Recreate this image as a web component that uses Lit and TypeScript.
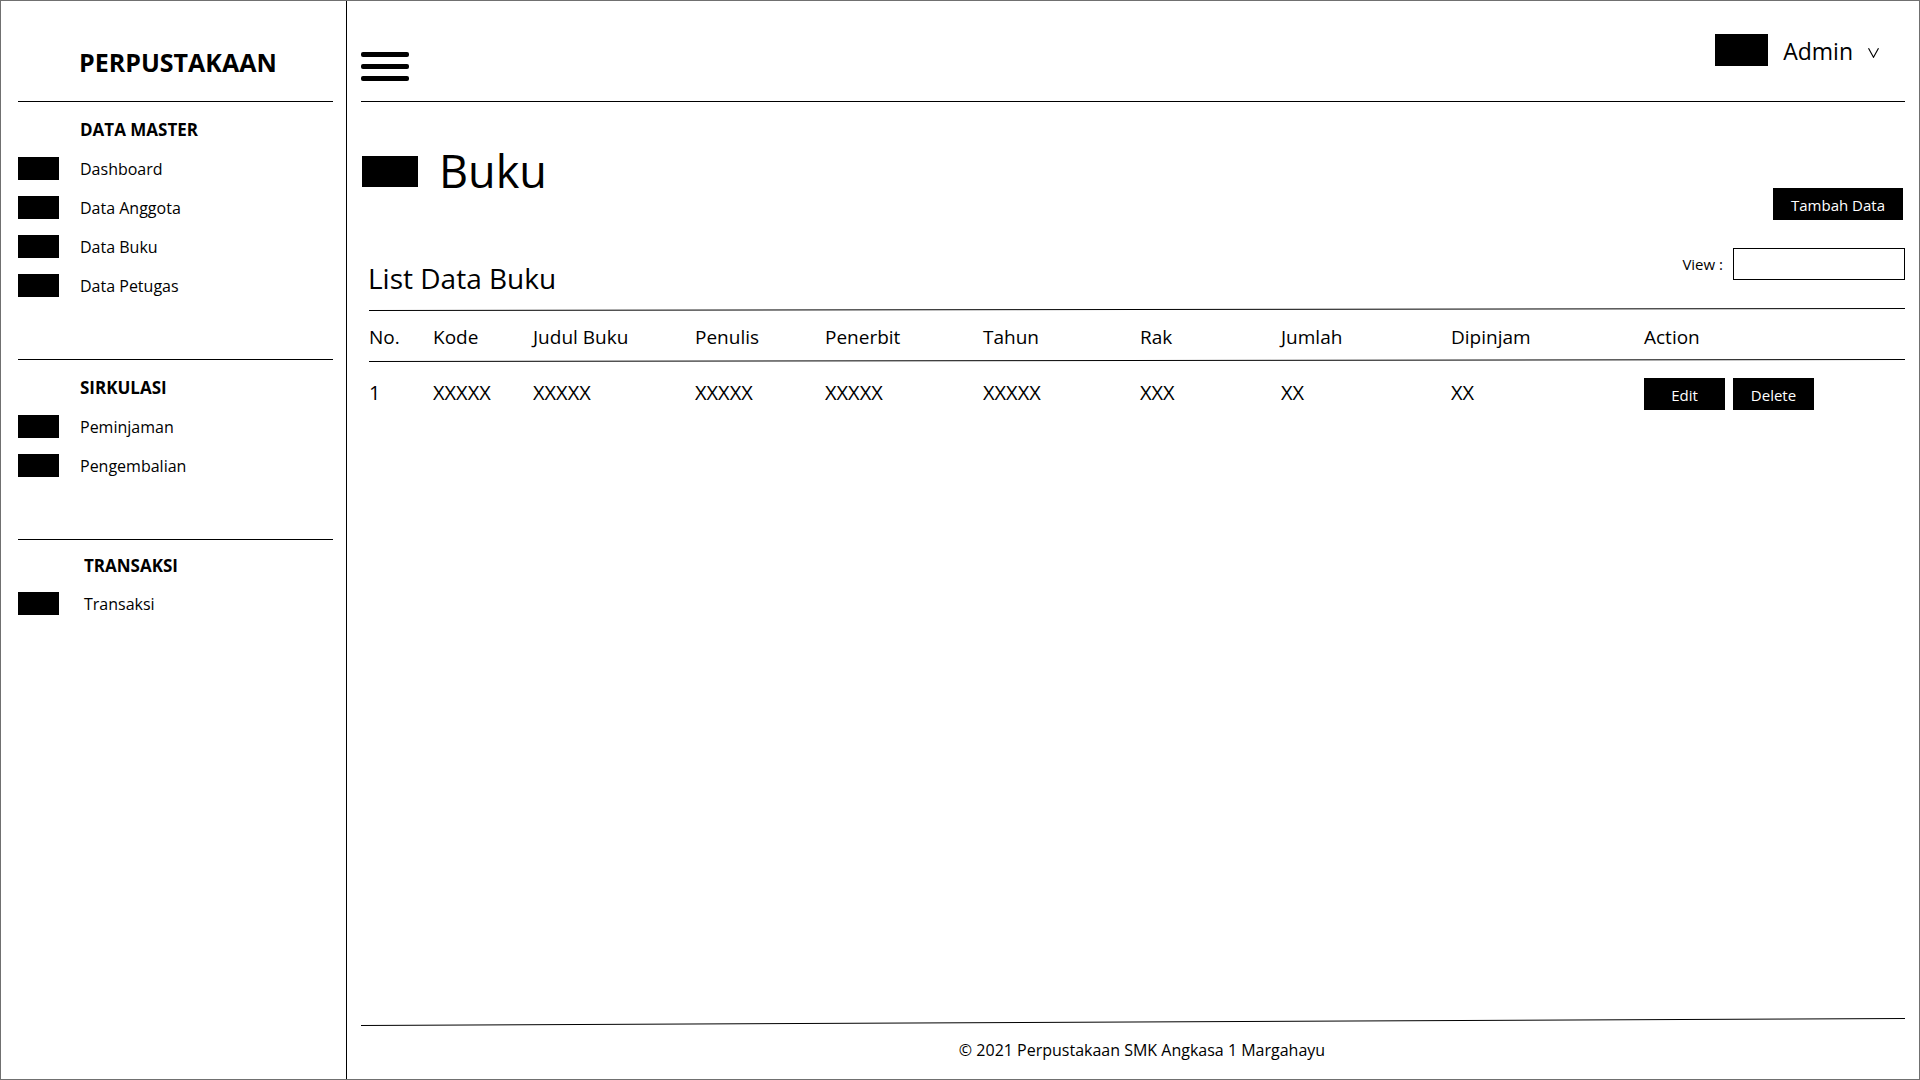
import { LitElement, html, css, svg } from "lit";
import { customElement, property } from "lit/decorators.js";
import { classMap } from "lit/directives/class-map.js";

interface NavSection {
  title: string;
  items: string[];
  inset?: boolean;
}

const SECTIONS: NavSection[] = [
  { title: "DATA MASTER", items: ["Dashboard", "Data Anggota", "Data Buku", "Data Petugas"] },
  { title: "SIRKULASI", items: ["Peminjaman", "Pengembalian"] },
  { title: "TRANSAKSI", items: ["Transaksi"], inset: true },
];

const COLUMNS = [
  { label: "No.", cls: "c-no" },
  { label: "Kode", cls: "c-kode" },
  { label: "Judul Buku", cls: "c-judul" },
  { label: "Penulis", cls: "c-penulis" },
  { label: "Penerbit", cls: "c-penerbit" },
  { label: "Tahun", cls: "c-tahun" },
  { label: "Rak", cls: "c-rak" },
  { label: "Jumlah", cls: "c-jumlah" },
  { label: "Dipinjam", cls: "c-dipinjam" },
  { label: "Action", cls: "c-action" },
];

const ROWS = [["1", "XXXXX", "XXXXX", "XXXXX", "XXXXX", "XXXXX", "XXX", "XX", "XX"]];

/** Full-width hairline that rises slightly towards its right end. */
@customElement("slant-rule")
export class SlantRule extends LitElement {
  @property({ type: Number }) rise = 2;

  static styles = css`
    :host {
      display: block;
    }
    .rule {
      display: block;
      width: 100%;
    }
    .stroke {
      stroke: #000;
      stroke-width: 1;
      vector-effect: non-scaling-stroke;
    }
  `;

  render() {
    const height = this.rise + 2;
    return html`<svg
      class="rule"
      height=${height}
      viewBox="0 0 100 ${height}"
      preserveAspectRatio="none"
      aria-hidden="true"
    >
      ${svg`<line class="stroke" x1="0" y1=${this.rise + 0.5} x2="100" y2="0.5" />`}
    </svg>`;
  }
}

@customElement("side-nav")
export class SideNav extends LitElement {
  static styles = css`
    :host {
      display: block;
      box-sizing: border-box;
      padding: 0 13px 0 17px;
      border-right: 1px solid #000;
    }
    .brand {
      margin: 0;
      padding: 45px 0 23px 61px;
      font-size: 25px;
      line-height: 32px;
      font-weight: 700;
    }
    .section {
      display: flex;
      flex-direction: column;
      gap: 15px;
      padding: 16px 0 62px;
      border-top: 1px solid #000;
    }
    .heading {
      margin: 0;
      padding-left: 62px;
      font-size: 17px;
      line-height: 24px;
      font-weight: 700;
    }
    .list {
      display: flex;
      flex-direction: column;
      gap: 16px;
      margin: 0;
      padding: 0;
      list-style: none;
    }
    .link {
      display: flex;
      align-items: center;
      gap: 21px;
      height: 23px;
      color: inherit;
      text-decoration: none;
      font-size: 16px;
      line-height: 24px;
    }
    .icon {
      width: 41px;
      height: 23px;
      background: #000;
    }
    .inset {
      gap: 14px;
      padding-top: 14px;
    }
    .inset .heading {
      padding-left: 66px;
    }
    .inset .link {
      gap: 25px;
    }
  `;

  render() {
    return html`
      <h1 class="brand">PERPUSTAKAAN</h1>
      <nav>
        ${SECTIONS.map(
          (s) => html`<section class=${classMap({ section: true, inset: !!s.inset })}>
            <h2 class="heading">${s.title}</h2>
            <ul class="list">
              ${s.items.map(
                (item) => html`<li>
                  <a class="link" href="#"><span class="icon"></span>${item}</a>
                </li>`
              )}
            </ul>
          </section>`
        )}
      </nav>
    `;
  }
}

@customElement("book-table")
export class BookTable extends LitElement {
  static styles = css`
    :host {
      display: block;
    }
    .table {
      width: 100%;
      table-layout: fixed;
      border-collapse: collapse;
    }
    .c-no { width: 64px; }
    .c-kode { width: 100px; }
    .c-judul { width: 162px; }
    .c-penulis { width: 130px; }
    .c-penerbit { width: 158px; }
    .c-tahun { width: 157px; }
    .c-rak { width: 141px; }
    .c-jumlah { width: 170px; }
    .c-dipinjam { width: 193px; }
    .c-action { width: 261px; }
    .th {
      padding: 13px 0 10px;
      font-size: 19px;
      line-height: 24px;
      font-weight: inherit;
      text-align: left;
    }
    .line {
      padding: 0;
    }
    .td {
      padding: 14px 0 16px;
      font-size: 20px;
      line-height: 24px;
    }
    .actions {
      padding: 15px 0;
    }
    .buttons {
      display: flex;
      gap: 8px;
    }
    .button {
      width: 81px;
      height: 32px;
      padding: 2px 0 0;
      border: 0;
      background: #000;
      color: #fff;
      font: inherit;
      font-size: 15px;
      line-height: 24px;
    }
  `;

  render() {
    return html`
      <slant-rule></slant-rule>
      <table class="table">
        <colgroup>
          ${COLUMNS.map((c) => html`<col class=${c.cls} />`)}
        </colgroup>
        <thead>
          <tr>
            ${COLUMNS.map((c) => html`<th class="th" scope="col">${c.label}</th>`)}
          </tr>
          <tr>
            <td class="line" colspan=${COLUMNS.length}><slant-rule></slant-rule></td>
          </tr>
        </thead>
        <tbody>
          ${ROWS.map(
            (row) => html`<tr>
              ${row.map((cell) => html`<td class="td">${cell}</td>`)}
              <td class="actions">
                <div class="buttons">
                  <button class="button" type="button">Edit</button>
                  <button class="button" type="button">Delete</button>
                </div>
              </td>
            </tr>`
          )}
        </tbody>
      </table>
    `;
  }
}

@customElement("app-root")
export class AppRoot extends LitElement {
  static styles = css`
    :host {
      display: block;
      color: #000;
      background: #fff;
      font-family: "Open Sans", "Noto Sans", sans-serif;
      font-weight: 400;
    }
    .page {
      display: grid;
      grid-template-columns: 346px minmax(0, 1fr);
      box-sizing: border-box;
      min-height: 100vh;
      border: 1px solid #707070;
    }
    .main {
      display: flex;
      flex-direction: column;
      padding: 0 14px;
    }
    .topbar {
      display: flex;
      justify-content: space-between;
      align-items: flex-start;
      box-sizing: border-box;
      height: 101px;
      border-bottom: 1px solid #000;
    }
    .menu {
      display: flex;
      margin: 51px 0 0;
      padding: 0;
      border: 0;
      background: none;
    }
    .user {
      display: flex;
      align-items: center;
      gap: 15px;
      margin: 33px 26px 0 0;
      padding: 0;
      border: 0;
      background: none;
      color: inherit;
      font: inherit;
      font-size: 23px;
      line-height: 30px;
    }
    .user-name {
      padding-top: 2px;
    }
    .avatar {
      width: 53px;
      height: 32px;
      background: #000;
    }
    .chevron {
      padding-top: 6px;
    }
    .titlebar {
      display: flex;
      justify-content: space-between;
      align-items: flex-end;
      padding: 37px 2px 0 1px;
    }
    .title {
      display: flex;
      align-items: center;
      gap: 21px;
      margin: 0 0 17px;
      font-size: 45px;
      line-height: 64px;
      font-weight: inherit;
    }
    .title-icon {
      width: 56px;
      height: 31px;
      background: #000;
    }
    .add {
      width: 130px;
      height: 32px;
      padding: 2px 0 0;
      border: 0;
      background: #000;
      color: #fff;
      font: inherit;
      font-size: 15px;
      line-height: 24px;
    }
    .listbar {
      display: flex;
      justify-content: space-between;
      align-items: flex-start;
      padding: 28px 0 10px 7px;
    }
    .list-title {
      margin: 10px 0 0;
      font-size: 28px;
      line-height: 40px;
      font-weight: inherit;
    }
    .view {
      display: flex;
      align-items: center;
      gap: 10px;
      font-size: 15px;
      line-height: 24px;
    }
    .view-input {
      box-sizing: border-box;
      width: 172px;
      height: 32px;
      padding: 0 8px;
      border: 1px solid #000;
      border-radius: 0;
      background: #fff;
      font: inherit;
    }
    .books {
      margin-left: 8px;
    }
    .footer {
      margin-top: auto;
    }
    .copyright {
      margin: 0;
      padding: 11px 0 17px 18px;
      font-size: 16px;
      line-height: 24px;
      text-align: center;
    }
  `;

  render() {
    return html`
      <div class="page">
        <side-nav></side-nav>
        <div class="main">
          <header class="topbar">
            <button class="menu" type="button" aria-label="Menu">
              <svg width="48" height="29" viewBox="0 0 48 29" aria-hidden="true">
                <rect width="48" height="5" rx="2" />
                <rect y="12" width="48" height="5" rx="2" />
                <rect y="24" width="48" height="5" rx="2" />
              </svg>
            </button>
            <button class="user" type="button">
              <span class="avatar"></span>
              <span class="user-name">Admin</span>
              <svg class="chevron" width="11" height="10" viewBox="0 0 11 10" aria-hidden="true">
                <path d="M0.5 0.2 L5.5 9.3 L10.5 0.2" fill="none" stroke="#000" stroke-width="1.1" />
              </svg>
            </button>
          </header>
          <main>
            <div class="titlebar">
              <h2 class="title"><span class="title-icon"></span>Buku</h2>
              <button class="add" type="button">Tambah Data</button>
            </div>
            <div class="listbar">
              <h3 class="list-title">List Data Buku</h3>
              <div class="view">
                <label for="view">View :</label>
                <input class="view-input" id="view" type="text" />
              </div>
            </div>
            <book-table class="books"></book-table>
          </main>
          <footer class="footer">
            <slant-rule rise="7"></slant-rule>
            <p class="copyright">© 2021 Perpustakaan SMK Angkasa 1 Margahayu</p>
          </footer>
        </div>
      </div>
    `;
  }
}
